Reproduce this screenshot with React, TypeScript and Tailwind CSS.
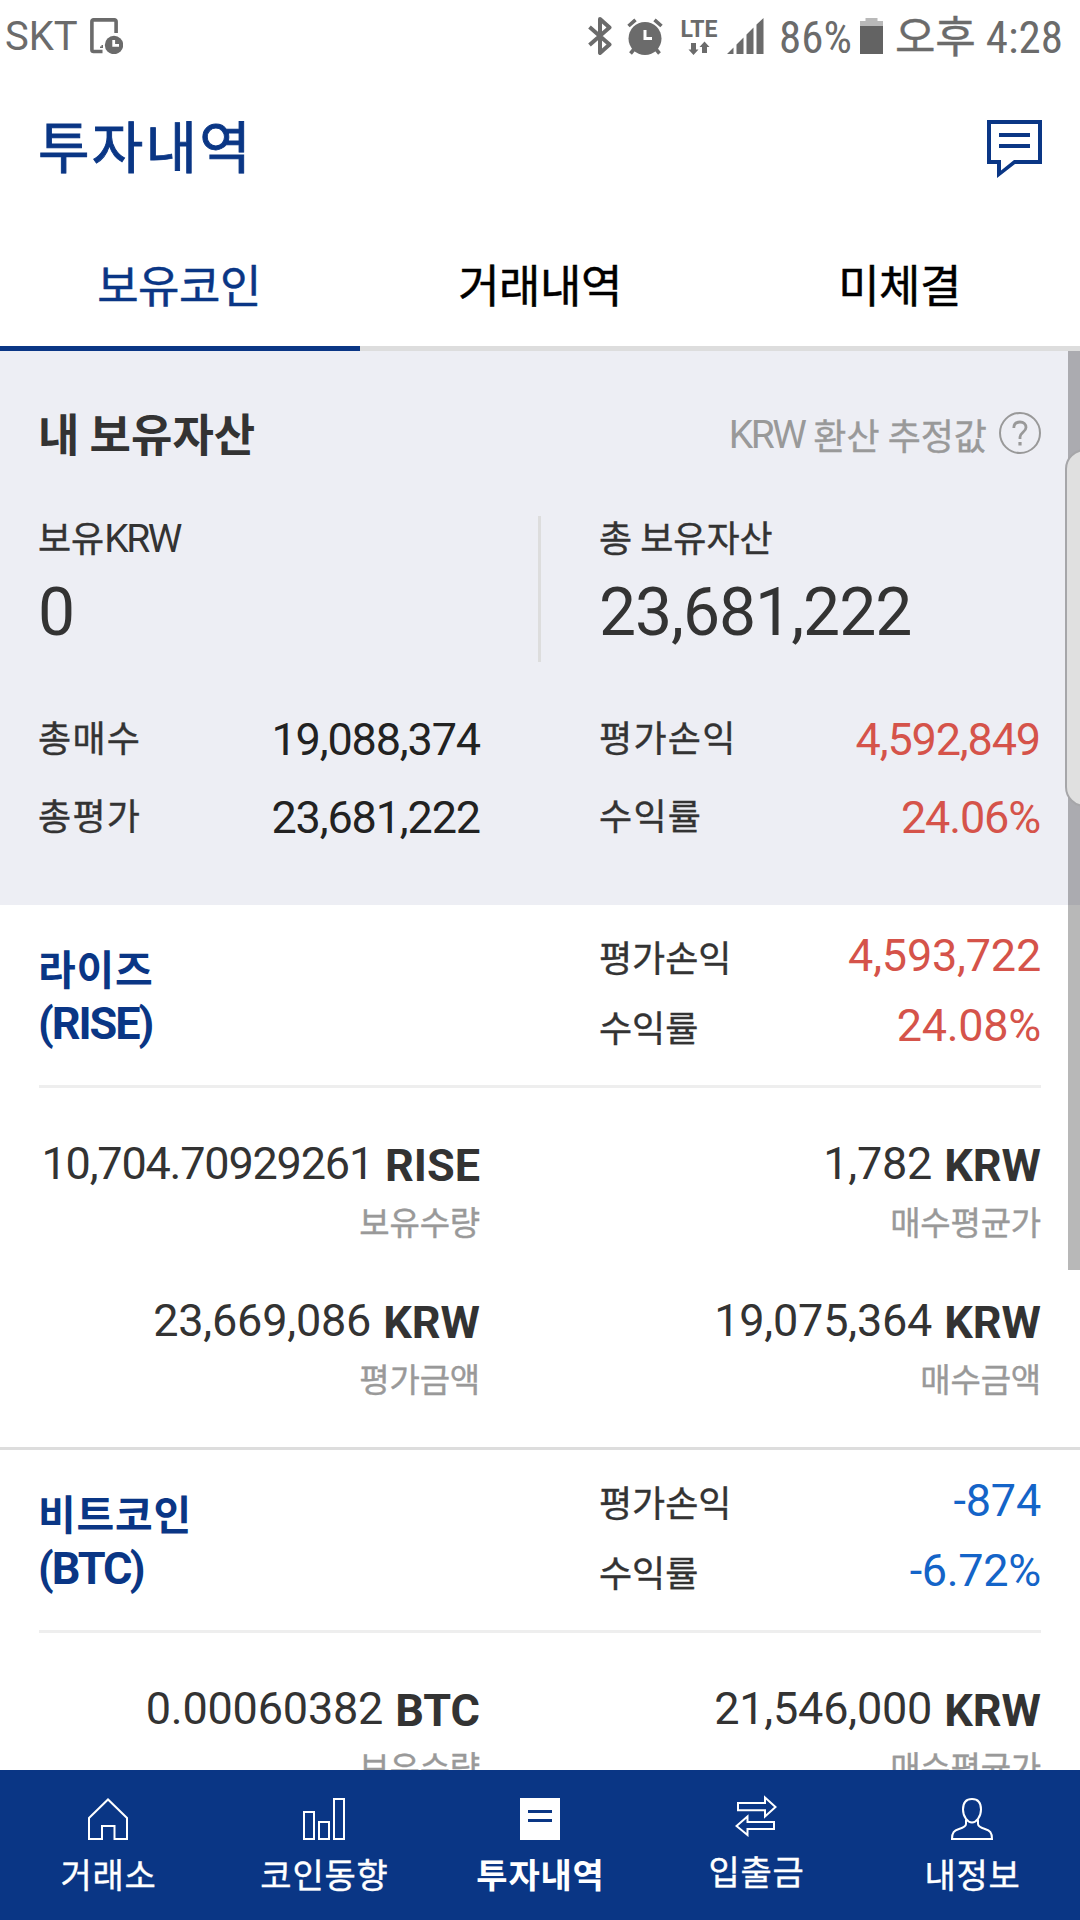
import React from 'react';
import clsx from 'clsx';

interface Amount {
  value: string;
  unit: string;
  label: string;
  tight?: boolean;
}

interface Coin {
  name: string;
  symbol: string;
  profit: string;
  rate: string;
  up: boolean;
  amounts: Amount[];
}

const coins: Coin[] = [
  {
    name: '라이즈',
    symbol: 'RISE',
    profit: '4,593,722',
    rate: '24.08%',
    up: true,
    amounts: [
      { value: '10,704.70929261', unit: 'RISE', label: '보유수량', tight: true },
      { value: '1,782', unit: 'KRW', label: '매수평균가' },
      { value: '23,669,086', unit: 'KRW', label: '평가금액' },
      { value: '19,075,364', unit: 'KRW', label: '매수금액' },
    ],
  },
  {
    name: '비트코인',
    symbol: 'BTC',
    profit: '-874',
    rate: '-6.72%',
    up: false,
    amounts: [
      { value: '0.00060382', unit: 'BTC', label: '보유수량' },
      { value: '21,546,000', unit: 'KRW', label: '매수평균가' },
    ],
  },
];

const summaryRows = [
  { label: '총매수', value: '19,088,374', red: false },
  { label: '평가손익', value: '4,592,849', red: true },
  { label: '총평가', value: '23,681,222', red: false },
  { label: '수익률', value: '24.06%', red: true },
];

const StatusBar = () => (
  <div className="flex h-[75px] shrink-0 items-center justify-between pl-[5px] pr-[17px] text-[#6b6b6b]">
    <div className="flex items-center gap-[12px]">
      <span className="mb-[2px] font-['Roboto'] text-[40px] leading-none">SKT</span>
      <svg className="mb-[3px] h-[36px] w-[33px]" viewBox="0 0 33 36" fill="none">
        <path d="M12.5 33.5H3.5A1.6 1.6 0 0 1 1.9 32V3.5A1.6 1.6 0 0 1 3.5 1.9H24.5A1.6 1.6 0 0 1 26.1 3.5V15" stroke="currentColor" strokeWidth="3.6" />
        <path d="M10 30V28.5H11.5V27H13V30Z" fill="currentColor" />
        <circle cx="24" cy="27" r="9.2" fill="currentColor" />
        <path d="M23.7 22V27.3H29" stroke="#fff" strokeWidth="2.8" />
      </svg>
    </div>
    <div className="flex items-center">
      <svg className="mb-[3px] h-[38px] w-[24px]" viewBox="0 0 24 38" fill="none" stroke="currentColor" strokeWidth="4" strokeLinejoin="round">
        <path d="M1.5 10L21.5 27.5L12 36V2L21.5 10.5L1.5 28" />
      </svg>
      <svg className="mb-[3px] ml-[15px] h-[37px] w-[36px]" viewBox="0 0 36 37" fill="none" stroke="currentColor">
        <circle cx="18" cy="20.5" r="16.5" fill="currentColor" stroke="none" />
        <path d="M1.5 8L8.5 1.8M27.5 1.8L34.5 8M8 30L3.5 35.5M28 30L32.5 35.5" strokeWidth="3.6" />
        <path d="M18 12V20.5H25" stroke="#fff" strokeWidth="3" />
      </svg>
      <div className="mb-[2px] ml-[16px] flex w-[40px] flex-col items-center">
        <span className="font-['Roboto'] text-[23px] font-bold leading-[22px]">LTE</span>
        <svg className="h-[14px] w-[22px]" viewBox="0 0 22 14" fill="currentColor">
          <path d="M3 2H8V8.5H10.5L5.5 14L0.5 8.5H3Z" />
          <path d="M14 12H19V6H21.5L16.5 0.5L11.5 6H14Z" />
        </svg>
      </div>
      <svg className="mb-[3px] ml-[8px] h-[36px] w-[37px]" viewBox="0 0 37 36" fill="currentColor">
        <path d="M0 36L6.5 29.5V36ZM9.5 26.5L16.5 19.5V36H9.5ZM19.5 16.5L26.5 9.5V36H19.5ZM29.5 6.5L36.5 0V36H29.5Z" />
      </svg>
      <span className="ml-[15px] font-['Roboto_Condensed'] text-[45px] leading-none">86%</span>
      <svg className="mb-[3px] ml-[8px] h-[36px] w-[23px]" viewBox="0 0 23 36">
        <path d="M5.5 0H17.5V3H23V8H0V3H5.5Z" fill="#b9b9b9" />
        <path d="M0 8H23V36H0Z" fill="#636363" />
      </svg>
      <span className="mb-[7px] ml-[12px] text-[44px] leading-none [-webkit-text-stroke:0.4px]">오후</span>
      <span className="ml-[10px] font-['Roboto_Condensed'] text-[45px] leading-none">4:28</span>
    </div>
  </div>
);

const Header = () => (
  <header className="flex h-[145px] shrink-0 items-start justify-between pl-[38px] pr-[38px] text-[#0a3685]">
    <h1 className="mt-[41px] text-[56px] font-normal leading-none tracking-[2.2px] [-webkit-text-stroke:0.9px]">투자내역</h1>
    <svg className="mt-[45px] h-[58px] w-[55px]" viewBox="0 0 55 58" fill="currentColor" fillRule="evenodd">
      <path d="M0 0H55V44H28L10 58V44H0ZM4 4V40H14V50.5L27 40H51V4ZM12 13H43V17H12ZM12 24H43V28H12Z" />
    </svg>
  </header>
);

const Tabs = () => (
  <div className="grid h-[131px] shrink-0 grid-cols-3 text-[45px] leading-none tracking-[-0.5px] text-black [-webkit-text-stroke:0.5px]">
    <div className="flex items-center justify-center border-b-[5px] border-[#0a3685] pr-[2px] text-[#0a3685]">보유코인</div>
    <div className="flex items-center justify-center border-b-[5px] border-[#dddddd]">거래내역</div>
    <div className="flex items-center justify-center border-b-[5px] border-[#dddddd] pr-px">미체결</div>
  </div>
);

const Summary = () => (
  <section className="h-[554px] bg-[#edeef4] pl-[38px] pr-[39px] pt-[58px] text-[#333333]">
    <div className="flex h-[45px] items-center justify-between">
      <h2 className="mt-[2px] text-[45px] font-bold leading-none">내 보유자산</h2>
      <div className="flex items-center text-[#999999]">
        <span className="mt-[8px] font-['Roboto'] text-[39px] leading-none tracking-[-2.5px]">KRW</span>
        <span className="ml-[9px] mt-[4px] text-[36px] leading-none [-webkit-text-stroke:0.4px]">환산 추정값</span>
        <svg className="ml-[12px] mt-[3px] h-[42px] w-[42px]" viewBox="0 0 42 42" fill="none" stroke="currentColor">
          <circle cx="21" cy="21" r="20" strokeWidth="2" />
          <path d="M14.8 16C14.8 12 17.3 10 21 10C24.7 10 27 12.3 27 15.5C27 20 21 20.5 21 25V27" strokeWidth="2.8" />
          <path d="M21 30V33.5" strokeWidth="3.2" />
        </svg>
      </div>
    </div>

    <div className="mt-[62px] flex h-[146px]">
      <div className="w-[500px] pt-[2px]">
        <p className="flex h-[36px] items-baseline text-[36px] leading-none">
          <span className="[-webkit-text-stroke:0.4px]">보유</span>
          <span className="font-['Roboto'] text-[39px] leading-[36px] tracking-[-2.5px]">KRW</span>
        </p>
        <p className="mt-[26px] font-['Roboto'] text-[66px] leading-none">0</p>
      </div>
      <div className="w-[3px] bg-[#dddddd]" />
      <div className="pl-[58px] pt-[2px]">
        <p className="text-[36px] leading-none [-webkit-text-stroke:0.4px]">총 보유자산</p>
        <p className="mt-[26px] font-['Roboto'] text-[66px] leading-none tracking-[-1.05px]">23,681,222</p>
      </div>
    </div>

    <dl className="mt-[55px] grid grid-cols-[442px_441px] gap-x-[119px] gap-y-[34px]">
      {summaryRows.map((row) => (
        <div key={row.label} className="flex h-[44px] items-center justify-between">
          <dt className="mb-[6px] text-[36px] leading-none tracking-[1.3px] [-webkit-text-stroke:0.4px]">{row.label}</dt>
          <dd
            className={clsx(
              "font-['Roboto'] text-[45px] leading-none tracking-[-1.15px]",
              row.red ? 'text-[#d5534a]' : 'text-[#222222]'
            )}
          >
            {row.value}
          </dd>
        </div>
      ))}
    </dl>
  </section>
);

const CoinCard: React.FC<{ coin: Coin }> = ({ coin }) => (
  <section className="h-[545px] border-b-[3px] border-[#dddddd] pl-[38px] pr-[39px] text-[#333333]">
    <div className="flex h-[180px] justify-between">
      <div className="pt-[42px] font-bold text-[#0a3685]">
        <h3 className="text-[41px] leading-none tracking-[0.8px]">{coin.name}</h3>
        <p className="mt-[13px] font-['Roboto'] text-[45px] leading-none tracking-[-2.05px]">({coin.symbol})</p>
      </div>
      <dl className="flex w-[442px] flex-col gap-[25px] pt-[29px]">
        <div className="flex h-[44px] items-center justify-between">
          <dt className="text-[36px] leading-none [-webkit-text-stroke:0.4px]">평가손익</dt>
          <dd className={clsx("mb-[2px] font-['Roboto'] text-[45px] leading-none tracking-[-0.2px]", coin.up ? 'text-[#d5534a]' : 'text-[#1464c8]')}>
            {coin.profit}
          </dd>
        </div>
        <div className="flex h-[44px] items-center justify-between">
          <dt className="mt-[2px] text-[36px] leading-none [-webkit-text-stroke:0.4px]">수익률</dt>
          <dd className={clsx("font-['Roboto'] text-[45px] leading-none tracking-[-0.3px]", coin.up ? 'text-[#d5534a]' : 'text-[#1464c8]')}>
            {coin.rate}
          </dd>
        </div>
      </dl>
    </div>
    <div className="ml-px h-[3px] bg-[#eeeeee]" />
    <div className="mt-[53px] grid grid-cols-[442px_442px] gap-x-[119px] gap-y-[60px]">
      {coin.amounts.map((item) => (
        <div key={item.label} className="text-right">
          <div className="flex h-[45px] items-center justify-end gap-[12px] font-['Roboto'] text-[45px] leading-none">
            <span className={item.tight ? 'tracking-[-1.2px]' : 'tracking-[-0.2px]'}>{item.value}</span>
            <span className="mt-[3px] font-bold">{item.unit}</span>
          </div>
          <p className="mt-[19px] text-[33px] leading-none tracking-[-0.2px] text-[#999999] [-webkit-text-stroke:0.4px]">{item.label}</p>
        </div>
      ))}
    </div>
  </section>
);

const HomeIcon = () => (
  <svg className="h-[42px] w-[40px]" viewBox="0 0 40 42" fill="none" stroke="currentColor" strokeWidth="2">
    <path d="M1 20L20 1.5L39 20V41H26.5V28H14V41H1Z" />
  </svg>
);

const ChartIcon = () => (
  <svg className="h-[42px] w-[42px]" viewBox="0 0 42 42" fill="none" stroke="currentColor" strokeWidth="2">
    <path d="M1 14H11V41H1ZM16 24H26V41H16ZM31 1H41V41H31Z" />
  </svg>
);

const HistoryIcon = () => (
  <svg className="h-[42px] w-[40px]" viewBox="0 0 40 42" fill="currentColor" fillRule="evenodd">
    <path d="M0 0H40V42H0ZM8 12V15H32V12ZM8 21V24H32V21Z" />
  </svg>
);

const TransferIcon = () => (
  <svg className="h-[42px] w-[42px]" viewBox="0 0 42 42" fill="none" stroke="currentColor" strokeWidth="2">
    <path d="M3 8H30V2.5L40.5 12L30 21.5V15.3H3Z" />
    <path d="M39 27H12.5V21.5L1.5 31L12.5 40V34H39Z" />
  </svg>
);

const UserIcon = () => (
  <svg className="h-[42px] w-[42px]" viewBox="0 0 42 42" fill="none" stroke="currentColor" strokeWidth="2">
    <path d="M21 1C15 1 12 4.500 12 11.5C12 19 17 24.5 21 24.5C25 24.5 30 19 30 11.5C30 4.5 27 1 21 1Z" />
    <path d="M15 21.5V26C15 28.5 12 29.8 8 31C3 32.6 1 34.5 1 41H41C41 34.5 39 32.6 34 31C30 29.8 27 28.5 27 26V21.5" />
  </svg>
);

const navItems = [
  { label: '거래소', icon: HomeIcon },
  { label: '코인동향', icon: ChartIcon },
  { label: '투자내역', icon: HistoryIcon, active: true },
  { label: '입출금', icon: TransferIcon, raised: true },
  { label: '내정보', icon: UserIcon },
];

const BottomNav = () => (
  <nav className="grid h-[150px] shrink-0 grid-cols-5 bg-[#0a3685] text-white">
    {navItems.map(({ label, icon: Icon, active, raised }) => (
      <div key={label} className={clsx('flex flex-col items-center', raised ? 'pt-[25px]' : 'pt-[28px]')}>
        <Icon />
        <span
          className={clsx(
            'mt-[17px] pl-px text-[34px] leading-none tracking-[0.8px]',
            active ? 'font-bold' : '[-webkit-text-stroke:0.4px]'
          )}
        >
          {label}
        </span>
      </div>
    ))}
  </nav>
);

export default function App() {
  return (
    <div className="relative flex h-[1920px] w-[1080px] flex-col overflow-hidden bg-white font-['Noto_Sans_CJK_KR',sans-serif]">
      <StatusBar />
      <Header />
      <Tabs />
      <main className="min-h-0 flex-1 overflow-hidden">
        <Summary />
        {coins.map((coin) => (
          <CoinCard key={coin.symbol} coin={coin} />
        ))}
      </main>
      <BottomNav />

      {/* scrollbar and edge panel handle */}
      <div className="absolute right-0 top-[351px] h-[919px] w-[12px] bg-black/28" />
      <div className="absolute -right-[25px] top-[449px] h-[358px] w-[40px] rounded-[20px] border-2 border-[#a6a6a9] bg-[#e0e0e0]" />
    </div>
  );
}
